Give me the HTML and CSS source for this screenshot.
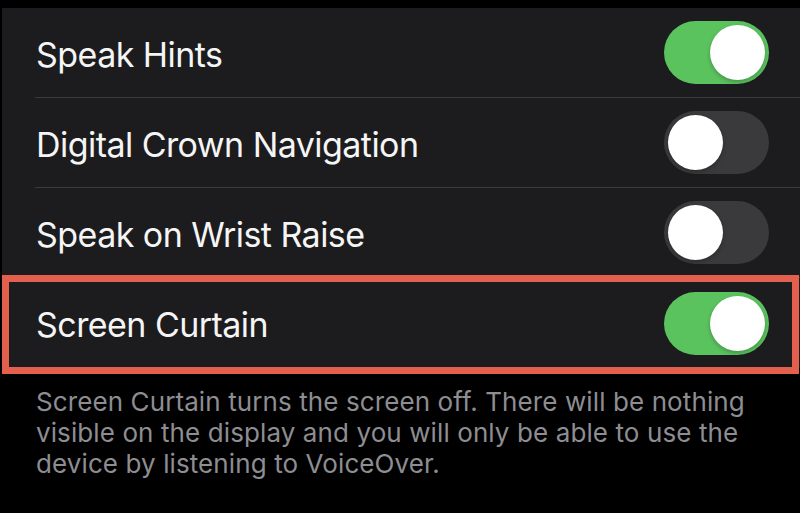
FILE: index.html
```html
<!DOCTYPE html>
<html>
<head>
<meta charset="utf-8">
<link rel="stylesheet" href="styles.css">
</head>
<body>
<div class="top"></div>
<div class="panel">
  <div class="row sep">
    <span class="label">Speak Hints</span>
    <span class="toggle on"><span class="knob"></span></span>
  </div>
  <div class="row sep">
    <span class="label">Digital Crown Navigation</span>
    <span class="toggle"><span class="knob"></span></span>
  </div>
  <div class="row sep">
    <span class="label">Speak on Wrist Raise</span>
    <span class="toggle"><span class="knob"></span></span>
  </div>
  <div class="row highlight">
    <span class="label">Screen Curtain</span>
    <span class="toggle on"><span class="knob"></span></span>
  </div>
</div>
<p class="footer">Screen Curtain turns the screen off. There will be nothing visible on the display and you will only be able to use the device by listening to VoiceOver.</p>
</body>
</html>
```

FILE: styles.css
```css
html, body {
  margin: 0;
  padding: 0;
  background: #000;
  width: 800px;
  height: 513px;
  overflow: hidden;
  font-family: "Inter", "Roboto", sans-serif;
}
.top {
  height: 8px;
}
.panel {
  margin-left: 2px;
  background: #1c1c1e;
}
.row {
  height: 90px;
  display: flex;
  align-items: center;
  justify-content: space-between;
  box-sizing: border-box;
  padding-left: 34px;
  padding-right: 31px;
}
.row.sep {
  margin-left: 33px;
  padding-left: 1px;
  border-bottom: 1px solid #3a3a3c;
}
.label {
  color: #f5f5f5;
  font-size: 34px;
  letter-spacing: -0.55px;
  padding-top: 3px;
}
.toggle {
  width: 105px;
  height: 63px;
  border-radius: 32px;
  background: #3a3a3c;
  display: flex;
  align-items: center;
  padding: 0 4px;
  box-sizing: border-box;
}
.toggle.on {
  background: #5ac35e;
  justify-content: flex-end;
}
.knob {
  width: 55px;
  height: 55px;
  border-radius: 50%;
  background: #fff;
  box-shadow: 0 2px 4px rgba(0,0,0,0.25);
}
.highlight {
  position: relative;
}
.highlight::after {
  content: "";
  position: absolute;
  left: 0;
  right: 1px;
  top: -3px;
  bottom: -6px;
  border: 7px solid #e35f4e;
  pointer-events: none;
}
.footer {
  margin: 0;
  padding: 18px 30px 0 36px;
  color: #8d8d92;
  font-size: 26px;
  letter-spacing: 0.1px;
  line-height: 31px;
}
```
